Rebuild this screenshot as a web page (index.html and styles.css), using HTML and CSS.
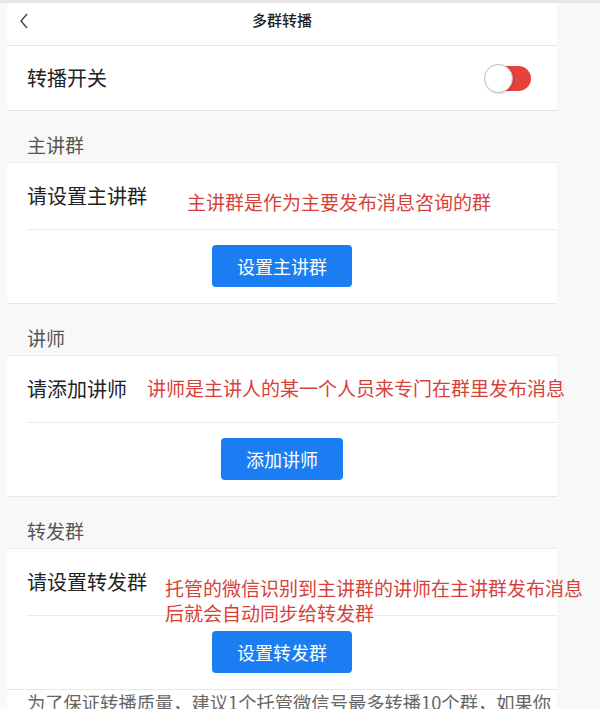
FILE: index.html
```html
<!DOCTYPE html>
<html lang="zh-CN">
<head>
<meta charset="utf-8">
<title>多群转播</title>
<link rel="stylesheet" href="styles.css">
</head>
<body>
<div class="page">
  <div class="panel">
    <div class="nav">
      <svg class="back" width="10" height="16" viewBox="0 0 10 16"><polyline points="8,1 2,8 8,15" fill="none" stroke="#444" stroke-width="1.4"/></svg>
      <div class="title">多群转播</div>
    </div>
    <div class="switch-row">
      <span class="label">转播开关</span>
      <span class="switch"><span class="track"></span><span class="knob"></span></span>
    </div>

    <div class="sec-head">主讲群</div>
    <div class="row">
      <span class="label">请设置主讲群</span>
      <span class="note note1">主讲群是作为主要发布消息咨询的群</span>
    </div>
    <div class="btn-area"><span class="btn">设置主讲群</span></div>

    <div class="sec-head">讲师</div>
    <div class="row">
      <span class="label">请添加讲师</span>
      <span class="note note2">讲师是主讲人的某一个人员来专门在群里发布消息</span>
    </div>
    <div class="btn-area"><span class="btn">添加讲师</span></div>

    <div class="sec-head">转发群</div>
    <div class="row">
      <span class="label">请设置转发群</span>
      <span class="note note3">托管的微信识别到主讲群的讲师在主讲群发布消息<br>后就会自动同步给转发群</span>
    </div>
    <div class="btn-area"><span class="btn">设置转发群</span></div>

    <div class="tip">为了保证转播质量，建议1个托管微信号最多转播10个群，如果你需要转播更多的群，请添加更多托管微信号。</div>
  </div>
</div>
</body>
</html>
```
FILE: styles.css
```css
html, body {
  margin: 0;
  padding: 0;
  background: #f8f8f8;
  font-family: "Noto Sans CJK SC", "Microsoft YaHei", sans-serif;
  overflow: hidden;
}
.page {
  border-top: 3px solid #e6e6e6;
  height: 706px;
  overflow: hidden;
}
.panel {
  width: 550px;
  margin-left: 7px;
  background: #fff;
}
.nav {
  position: relative;
  height: 43px;
  box-sizing: border-box;
  padding-top: 6px;
  border-bottom: 1px solid #e4e4e4;
  display: flex;
  align-items: flex-start;
  justify-content: center;
}
.back {
  position: absolute;
  left: 12px;
  top: 10px;
}
.title {
  font-size: 15px;
  line-height: 22px;
  font-weight: 500;
  color: #222;
}
.switch-row {
  height: 65px;
  box-sizing: border-box;
  border-bottom: 1px solid #e4e4e4;
  display: flex;
  align-items: center;
  justify-content: space-between;
  padding: 0 26px 0 20px;
}
.label {
  font-size: 20px;
  color: #222;
  line-height: 24px;
}
.switch {
  position: relative;
  width: 47px;
  height: 29px;
}
.track {
  position: absolute;
  left: 4px;
  top: 2px;
  width: 43px;
  height: 25px;
  border-radius: 13px;
  background: #e8403b;
}
.knob {
  position: absolute;
  left: 0;
  top: 0;
  width: 27px;
  height: 27px;
  border-radius: 50%;
  background: #fff;
  border: 1px solid #bdbdbd;
  box-shadow: 1px 1px 2px rgba(0,0,0,0.15);
}
.sec-head {
  height: 52px;
  box-sizing: border-box;
  padding: 24px 20px 0;
  line-height: 20px;
  font-size: 19px;
  color: #555;
  background: #f8f8f8;
  border-bottom: 1px solid #ededed;
}
.row {
  position: relative;
  height: 66px;
  display: flex;
  align-items: center;
  padding: 0 20px;
}
.row::after {
  content: "";
  position: absolute;
  left: 20px;
  right: 0;
  bottom: -1px;
  height: 1px;
  background: #ebebeb;
}
.note {
  position: absolute;
  z-index: 1;
  font-size: 19px;
  line-height: 25px;
  color: #d6423a;
  white-space: nowrap;
}
.note1 { left: 180px; top: 26px; }
.note2 { left: 140px; top: 19px; }
.note3 { left: 158px; top: 26px; }
.btn-area {
  margin-top: 1px;
  height: 74px;
  box-sizing: border-box;
  padding-top: 15px;
  border-bottom: 1px solid #e6e6e6;
  display: flex;
  justify-content: center;
  align-items: flex-start;
}
.btn {
  height: 42px;
  line-height: 42px;
  padding: 0 25px;
  border-radius: 4px;
  background: #1a7ef2;
  color: #fff;
  font-size: 18px;
}
.tip {
  padding: 0 0 0 20px;
  font-size: 18.3px;
  line-height: 25px;
  color: #666;
  background: #fff;
}
```
